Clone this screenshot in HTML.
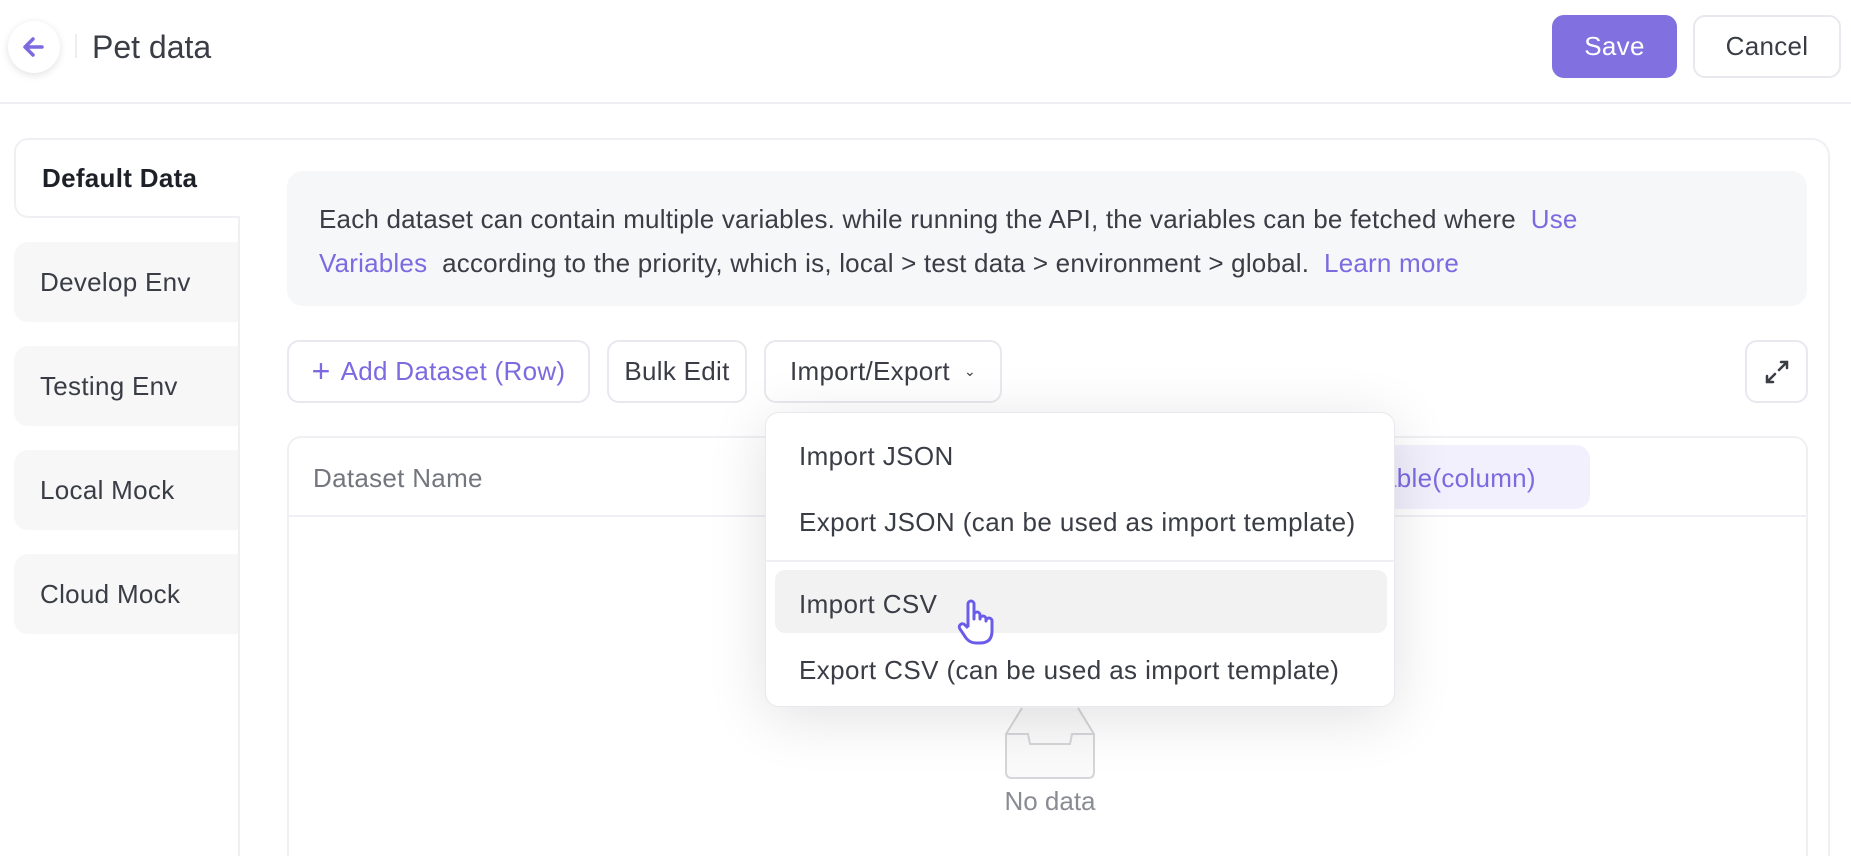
<!DOCTYPE html>
<html style="overflow:hidden;width:1851px;height:856px"><head><meta charset="utf-8"><style>
*{box-sizing:border-box;margin:0;padding:0}
body{width:1851px;height:856px;overflow:hidden;background:#fff;font-family:"Liberation Sans",sans-serif;color:#3a3d45;position:relative}
.a{position:absolute}
.hdr{left:0;top:0;width:1851px;height:104px;border-bottom:2px solid #f0f0f4}
.back{left:8px;top:21px;width:52px;height:52px;border-radius:50%;background:#fff;box-shadow:0 2px 8px rgba(0,0,0,.12)}
.btn{border:2px solid #e8e8ee;border-radius:12px;background:#fff;display:flex;align-items:center;justify-content:center;font-size:26px;letter-spacing:.3px;color:#3a3d45}
.tab{left:14px;width:224px;height:80px;background:#f7f7f8;border-radius:14px 0 0 14px;font-size:26px;letter-spacing:.3px;padding-left:26px;display:flex;align-items:center}
.info{left:287px;top:171px;width:1520px;height:135px;background:#f6f7f9;border-radius:16px;padding:26px 0 0 32px;font-size:26px;letter-spacing:.2px;line-height:44px;color:#3a3d45;white-space:nowrap}
.p{color:#7b6ae0}
.menu{left:765px;top:412px;width:630px;height:295px;background:#fff;border:1px solid #e8e8ee;border-radius:14px;box-shadow:0 10px 60px rgba(0,0,0,.12)}
.mi{position:absolute;left:33px;font-size:26px;letter-spacing:.4px;color:#3a3d45}
</style></head><body>
<div class="a hdr"></div>
<div class="a back"><svg width="52" height="52" viewBox="0 0 52 52"><path d="M34 26H18M25 18l-8 8 8 8" stroke="#7b6ae0" stroke-width="3.5" fill="none" stroke-linecap="round" stroke-linejoin="round"/></svg></div>
<div class="a" style="left:75px;top:34px;width:2px;height:24px;background:#eee"></div>
<div class="a" style="left:92px;top:29px;font-size:32px;color:#3a3d45">Pet data</div>
<div class="a btn" style="left:1552px;top:15px;width:125px;height:63px;background:#8170e0;border-color:#8170e0;color:#fff">Save</div>
<div class="a btn" style="left:1693px;top:15px;width:148px;height:63px">Cancel</div>

<div class="a" style="left:238px;top:138px;width:1592px;height:718px;border:2px solid #f0f0f4;border-bottom:none;border-radius:0 18px 0 0"></div>
<div class="a tab" style="top:138px;background:#fff;border:2px solid #f0f0f4;border-right:none;font-weight:bold;color:#1e2028;width:226px">Default Data</div>
<div class="a tab" style="top:242px">Develop Env</div>
<div class="a tab" style="top:346px">Testing Env</div>
<div class="a tab" style="top:450px">Local Mock</div>
<div class="a tab" style="top:554px">Cloud Mock</div>

<div class="a info">Each dataset can contain multiple variables. while running the API, the variables can be fetched where &nbsp;<span class="p">Use</span><br><span class="p">Variables</span>&nbsp; according to the priority, which is, local &gt; test data &gt; environment &gt; global.&nbsp; <span class="p">Learn more</span></div>

<div class="a btn" style="left:287px;top:340px;width:303px;height:63px;color:#7b6ae0"><span style="font-size:32px;margin-right:10px;font-weight:300">+</span>Add Dataset (Row)</div>
<div class="a btn" style="left:607px;top:340px;width:140px;height:63px">Bulk Edit</div>
<div class="a btn" style="left:764px;top:340px;width:238px;height:63px">Import/Export<span style="font-size:14px;margin-left:14px">&#8964;</span></div>
<div class="a btn" style="left:1745px;top:340px;width:63px;height:63px"><svg width="28" height="28" viewBox="0 0 28 28"><path d="M16 12l8-8M18 4h6v6M12 16l-8 8M4 18v6h6" stroke="#3a3d45" stroke-width="2.5" fill="none" stroke-linecap="round"/></svg></div>

<div class="a" style="left:287px;top:436px;width:1521px;height:420px;border:2px solid #f0f0f4;border-bottom:none;border-radius:14px 14px 0 0"></div>
<div class="a" style="left:287px;top:515px;width:1521px;height:2px;background:#f0f0f4"></div>
<div class="a" style="left:313px;top:463px;font-size:26px;letter-spacing:.3px;color:#74767e">Dataset Name</div>
<div class="a" style="left:1330px;top:445px;width:260px;height:64px;background:#f2f0fd;border-radius:14px;font-size:26px;letter-spacing:.3px;color:#7b6ae0;padding:18px 0 0 52px">able(column)</div>

<div class="a" style="left:1002px;top:706px"><svg width="96" height="76" viewBox="0 0 96 76"><path d="M20 2L4 28v38q0 6 6 6h76q6 0 6-6V28L76 2" stroke="#d6d6da" stroke-width="2" fill="#fafafa"/><path d="M4 28h22l2 10h40l2-10h22" stroke="#d6d6da" stroke-width="2" fill="none"/></svg></div>
<div class="a" style="left:980px;top:786px;width:140px;text-align:center;font-size:26px;color:#8a8c93">No data</div>

<div class="a menu">
<div class="mi" style="top:28px">Import JSON</div>
<div class="mi" style="top:94px">Export JSON (can be used as import template)</div>
<div class="a" style="left:0;top:147px;width:628px;height:2px;background:#f0f0f4"></div>
<div class="a" style="left:9px;top:157px;width:612px;height:63px;background:#f2f2f3;border-radius:10px"></div>
<div class="mi" style="top:176px">Import CSV</div>
<div class="mi" style="top:242px">Export CSV (can be used as import template)</div>
<svg class="a" style="left:190px;top:186px" width="40" height="46" viewBox="0 0 40 46"><path d="M12 28V5a3 3 0 016 0v15v-4a3 3 0 016 0v4a3 3 0 016 0v2a3 3 0 016 0v10q0 12-12 12h-4q-6 0-10-5L4 30a3 3 0 015-4l3 3" fill="#fff" stroke="#6a5ce8" stroke-width="3" stroke-linejoin="round"/></svg>
</div>
</body></html>
